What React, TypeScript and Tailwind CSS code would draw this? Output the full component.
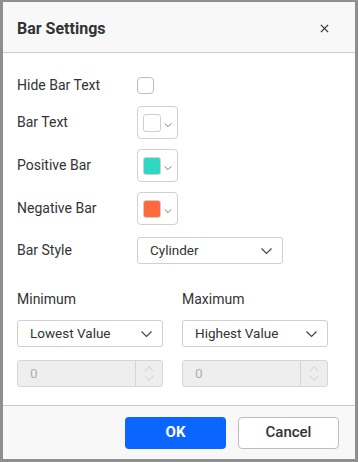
import React from 'react';

const Chevron: React.FC<{ className?: string }> = ({ className }) => (
    <svg viewBox="0 0 12 8" className={className} fill="none" stroke="currentColor" strokeWidth="1.2">
        <path d="M1 1.5 L6 6.5 L11 1.5" />
    </svg>
);

const ColorPick: React.FC<{ color: string }> = ({ color }) => (
    <div className="flex items-center w-[41px] h-[33px] border border-[#d0d0d0] rounded-[4px] pl-[5px] bg-white">
        <div className="w-[18px] h-[18px] rounded-[3px] border border-[#cfcfcf]" style={{ background: color }} />
        <Chevron className="w-[8px] h-[6px] ml-[3px] mt-[4px] text-[#555]" />
    </div>
);

const Select: React.FC<{ value: string; className?: string }> = ({ value, className }) => (
    <div className={`flex items-center justify-between h-[27px] border border-[#cfcfcf] rounded-[3px] bg-white pl-[12px] pr-[9px] ${className ?? ''}`}>
        <span className="text-[13.5px] text-[#333]">{value}</span>
        <Chevron className="w-[13px] h-[8px] text-[#444]" />
    </div>
);

const NumBox: React.FC = () => (
    <div className="flex h-[27px] w-[146px] border border-[#d6d6d6] rounded-[3px] bg-[#eeeeee]">
        <span className="flex-1 pl-[12px] leading-[25px] text-[13.5px] text-[#b0b0b0]">0</span>
        <div className="w-[27px] border-l border-[#d6d6d6] flex flex-col items-center justify-center gap-[3px]">
            <svg viewBox="0 0 12 7" className="w-[12px] h-[6px]" fill="none" stroke="#c8c8c8" strokeWidth="1"><path d="M1 6 L6 1 L11 6" /></svg>
            <svg viewBox="0 0 12 7" className="w-[12px] h-[6px]" fill="none" stroke="#c8c8c8" strokeWidth="1"><path d="M1 1 L6 6 L11 1" /></svg>
        </div>
    </div>
);

const Row: React.FC<{ label: string; children: React.ReactNode; className?: string }> = ({ label, children, className }) => (
    <div className={`flex items-center ${className ?? ''}`}>
        <span className="w-[120px] text-[14px] text-[#333]">{label}</span>
        {children}
    </div>
);

export default function App() {
    return (
        <div className="w-[358px] h-[462px] bg-[#8f8f8f] pl-[3px] pr-[3px] pt-[2px] pb-[3px]" style={{ fontFamily: 'Roboto, "Liberation Sans", sans-serif' }}>
            <div className="h-full flex flex-col bg-white">
                <div className="h-[51px] bg-[#f8f8f8] border-b border-[#cccccc] flex items-center justify-between pl-[14px] pr-[26px] pt-[3px] shrink-0">
                    <span className="text-[16px] font-bold text-[#333]">Bar Settings</span>
                    <svg viewBox="0 0 10 10" className="w-[9px] h-[9px] mt-[-1px]" stroke="#333" strokeWidth="1.4"><path d="M1 1 L9 9 M9 1 L1 9" /></svg>
                </div>
                <div className="flex-1 px-[14px] pt-[22px]">
                    <Row label="Hide Bar Text">
                        <div className="w-[17px] h-[17px] border border-[#bdbdbd] rounded-[4px] bg-white" />
                    </Row>
                    <Row label="Bar Text" className="mt-[10px]">
                        <ColorPick color="#ffffff" />
                    </Row>
                    <Row label="Positive Bar" className="mt-[10px]">
                        <ColorPick color="#2ed8c3" />
                    </Row>
                    <Row label="Negative Bar" className="mt-[10px]">
                        <ColorPick color="#ff6a3d" />
                    </Row>
                    <Row label="Bar Style" className="mt-[12px]">
                        <Select value="Cylinder" className="w-[146px]" />
                    </Row>
                    <div className="grid grid-cols-[146px_146px] gap-x-[19px] mt-[27px]">
                        <span className="text-[14px] text-[#333] leading-[16px]">Minimum</span>
                        <span className="text-[14px] text-[#333] leading-[16px]">Maximum</span>
                        <Select value="Lowest Value" className="mt-[13px]" />
                        <Select value="Highest Value" className="mt-[13px]" />
                        <div className="mt-[13px]"><NumBox /></div>
                        <div className="mt-[13px]"><NumBox /></div>
                    </div>
                </div>
                <div className="h-[54px] bg-[#f8f8f8] border-t border-[#cccccc] flex items-center justify-end gap-[12px] pr-[16px] shrink-0">
                    <button className="w-[101px] h-[32px] rounded-[4px] bg-[#0a66ff] text-white text-[15px] font-bold">OK</button>
                    <button className="w-[101px] h-[32px] rounded-[4px] bg-white border border-[#bdbdbd] text-[#333] text-[15px] font-medium">Cancel</button>
                </div>
            </div>
        </div>
    );
}
